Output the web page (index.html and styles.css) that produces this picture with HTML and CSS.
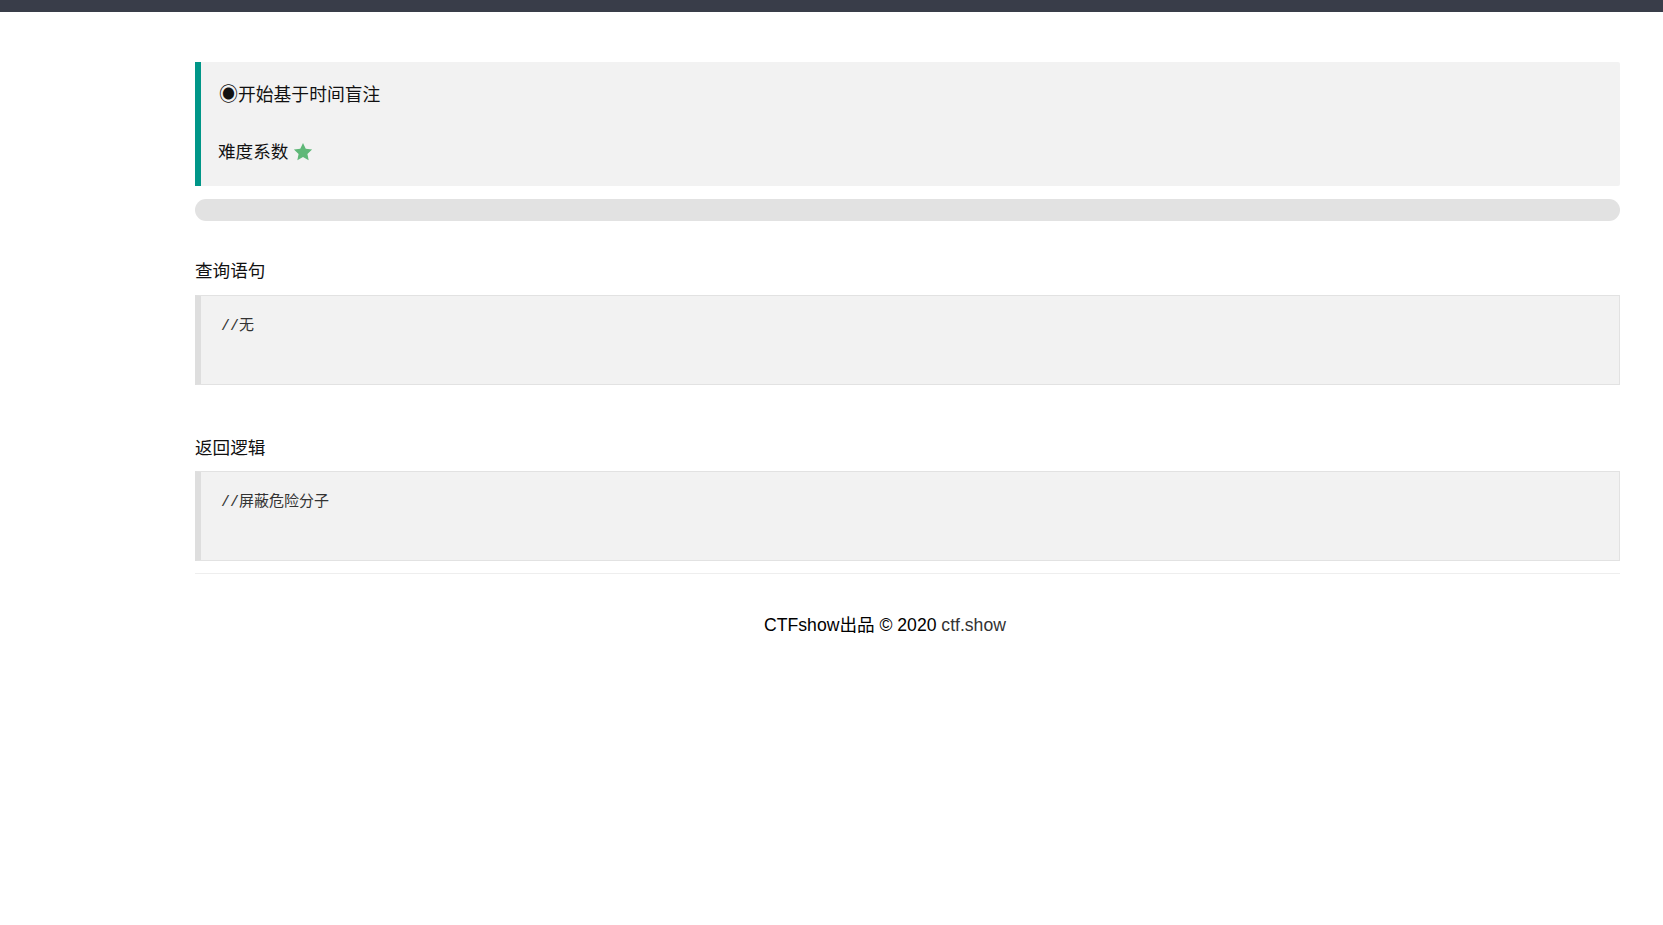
FILE: index.html
```html
<!DOCTYPE html>
<html lang="zh-CN">
<head>
<meta charset="utf-8">
<title>ctf.show</title>
<link rel="stylesheet" href="styles.css">
</head>
<body>
<div class="topbar"></div>
<div class="main">
  <blockquote class="quote">
    <h3 class="quote-title"><span class="bullet">◉</span>开始基于时间盲注</h3>
    <p class="quote-level">难度系数 <svg class="star" viewBox="0 0 24 24" width="20" height="20"><path d="M12 1.2l3.3 7 7.6.9-5.6 5.2 1.5 7.6L12 18.1l-6.8 3.8 1.5-7.6L1.1 9.1l7.6-.9z" fill="#5FB878"/></svg></p>
  </blockquote>
  <div class="progress"></div>

  <h4 class="section-title first">查询语句</h4>
  <pre class="code">//无</pre>

  <h4 class="section-title">返回逻辑</h4>
  <pre class="code second">//屏蔽危险分子</pre>

  <hr class="rule">
  <div class="footer">CTFshow出品 © 2020 <a class="footer-link" href="#">ctf.show</a></div>
</div>
</body>
</html>
```
FILE: styles.css
```css
html, body {
  margin: 0;
  padding: 0;
  background: #fff;
  color: #222;
  font-family: "Liberation Sans", "Noto Sans CJK SC", sans-serif;
}

.topbar {
  height: 12px;
  background: #393D49;
}

.main {
  padding: 50px 43px 0 195px;
}

.quote {
  margin: 0;
  padding: 22px 17px 24px 17px;
  background: #f2f2f2;
  border-left: 6px solid #009688;
  border-radius: 0 2px 2px 0;
}

.quote-title {
  margin: 0;
  font-size: 17.8px;
  font-weight: normal;
  line-height: 22px;
  color: #111;
}

.bullet {
  font-size: 19px;
  margin-left: 1px;
}

.quote-level {
  margin: 36px 0 0 0;
  font-size: 17.6px;
  line-height: 20px;
  color: #111;
  display: flex;
  align-items: center;
}

.star {
  margin-left: 5px;
  display: block;
}

.progress {
  margin-top: 13px;
  height: 22px;
  border-radius: 11px;
  background: #e2e2e2;
}

.section-title {
  margin: 51px 0 0 0;
  font-size: 17.6px;
  font-weight: normal;
  line-height: 24px;
  color: #111;
}

.section-title.first {
  margin-top: 38px;
}

.code {
  margin: 12px 0 0 0;
  padding: 21px 15px 47px 20px;
  background: #f2f2f2;
  border: 1px solid #e2e2e2;
  border-left: 6px solid #dedede;
  font-family: "Liberation Mono", "Noto Sans CJK SC", monospace;
  font-size: 15px;
  line-height: 20px;
  color: #333;
}

.code.second {
  margin-top: 11px;
}

.rule {
  margin: 12px 0 0 0;
  border: 0;
  height: 1px;
  background: #eee;
}

.footer {
  margin-top: 39px;
  padding-right: 45px;
  text-align: center;
  font-size: 17.6px;
  line-height: 24px;
  color: #000;
}

.footer-link {
  color: #333;
  text-decoration: none;
}
```
